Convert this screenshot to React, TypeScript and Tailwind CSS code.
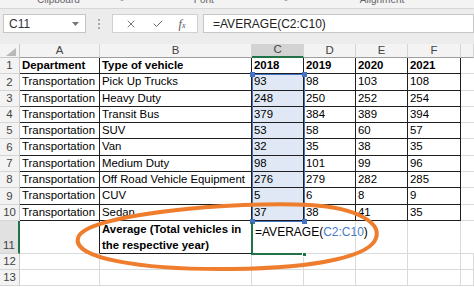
import React from 'react';
import { X, Check } from 'lucide-react';

const rows = [
  ['Department', 'Type of vehicle', '2018', '2019', '2020', '2021'],
  ['Transportation', 'Pick Up Trucks', '93', '98', '103', '108'],
  ['Transportation', 'Heavy Duty', '248', '250', '252', '254'],
  ['Transportation', 'Transit Bus', '379', '384', '389', '394'],
  ['Transportation', 'SUV', '53', '58', '60', '57'],
  ['Transportation', 'Van', '32', '35', '38', '35'],
  ['Transportation', 'Medium Duty', '98', '101', '99', '96'],
  ['Transportation', 'Off Road Vehicle Equipment', '276', '279', '282', '285'],
  ['Transportation', 'CUV', '5', '6', '8', '9'],
  ['Transportation', 'Sedan', '37', '38', '41', '35'],
];

const cols = ['A', 'B', 'C', 'D', 'E', 'F', ''];

const RowHead = ({ n, h, active }: { n: string; h: string; active?: boolean }) => (
  <div
    className={`${h} flex items-end justify-center border-b border-[#d5d5d5] leading-[16px] text-[#444] ${
      active ? 'bg-[#e1e1e1] border-r-2 border-r-[#217346]' : 'bg-[#f3f3f3] border-r border-r-[#c8c8c8]'
    }`}
  >
    {n}
  </div>
);

const App = () => {
  return (
    <div className="relative w-[474px] h-[287px] overflow-hidden bg-white font-['Liberation_Sans',Arial,sans-serif] text-[11.4px] text-black">
      {/* ribbon group labels, cut off at the top */}
      <div className="h-[9px] overflow-hidden bg-[#f3f3f3] border-b border-[#d6d6d6] text-[10px] text-[#666] flex">
        <span className="ml-[37px] -mt-[8px]">Clipboard</span>
        <span className="ml-[40px] -mt-[8px] text-[8px]">⌞</span>
        <span className="ml-[70px] -mt-[8px]">Font</span>
        <span className="ml-[70px] -mt-[8px] text-[8px]">⌞</span>
        <span className="ml-[72px] -mt-[8px]">Alignment</span>
      </div>

      {/* formula bar */}
      <div className="h-[35px] bg-[#ececec] pt-[5px] flex items-start">
        <div className="ml-[3px] w-[83px] h-[19px] bg-white border border-[#c6c6c6] flex items-center pl-[5px] text-[12px] text-[#333]">
          <span className="flex-1">C11</span>
          <svg width="7" height="4" viewBox="0 0 7 4" className="mr-[6px]">
            <path d="M0 0 L7 0 L3.5 4 Z" fill="#777" />
          </svg>
        </div>
        <div className="w-[26px] h-[19px] flex flex-col items-center justify-center gap-[2px]">
          <span className="w-[2px] h-[2px] bg-[#aaa]" />
          <span className="w-[2px] h-[2px] bg-[#aaa]" />
          <span className="w-[2px] h-[2px] bg-[#aaa]" />
        </div>
        <div className="w-[86px] h-[19px] bg-white border border-[#d0d0d0] flex items-center justify-around px-[4px] text-[#555]">
          <X size={12} strokeWidth={1.6} />
          <Check size={12} strokeWidth={1.8} />
          <span className="font-['Liberation_Serif',serif] italic text-[12px] text-[#555]">
            f<span className="text-[8px]">x</span>
          </span>
        </div>
        <div className="ml-[5px] flex-1 h-[19px] bg-white border border-[#c6c6c6] flex items-center pl-[9px] text-[12px] text-[#222]">
          =AVERAGE(C2:C10)
        </div>
      </div>

      {/* sheet grid */}
      <div className="relative grid grid-cols-[20px_80px_152px_52px_52px_52px_53px_1fr]">
        {/* column headers */}
        <div className="h-[14px] bg-[#f3f3f3] border-r border-b border-[#c8c8c8] relative">
          <svg width="10" height="8" viewBox="0 0 10 8" className="absolute right-[3px] bottom-[1px]">
            <path d="M10 0 L10 8 L0 8 Z" fill="#b9b9b9" />
          </svg>
        </div>
        {cols.map((c) => (
          <div
            key={c || 'g'}
            className={`h-[14px] flex items-center justify-center text-[#444] border-r border-r-[#d5d5d5] ${
              c === 'C' ? 'bg-[#d3d3d3] border-b-2 border-b-[#217346]' : 'bg-[#f3f3f3] border-b border-b-[#9e9e9e]'
            }`}
          >
            {c}
          </div>
        ))}

        {/* rows 1..10 */}
        {rows.map((r, i) => (
          <React.Fragment key={i}>
            <RowHead n={String(i + 1)} h="h-[16.3px]" />
            {r.map((v, j) => (
              <div
                key={j}
                className={`h-[16.3px] px-[2px] leading-[15px] whitespace-nowrap border-r border-b border-[#1f1f1f] ${
                  i === 0 ? 'font-bold' : ''
                } ${j === 2 && i > 0 ? 'bg-[#dfe8f4]' : ''}`}
              >
                {v}
              </div>
            ))}
            <div className="h-[16.3px] border-b border-[#dadada]" />
          </React.Fragment>
        ))}

        {/* row 11 */}
        <RowHead n="11" h="h-[33px]" active />
        <div className="h-[33px] border-r border-r-[#1f1f1f] border-b border-b-[#dadada]" />
        <div className="h-[33px] px-[2px] leading-[16px] font-bold border-r border-b border-[#1f1f1f] flex flex-col justify-end">
          <span>Average (Total vehicles in</span>
          <span>the respective year)</span>
        </div>
        <div className="relative z-10 h-[33px] pl-[3px] pt-[3px] leading-[16px] whitespace-nowrap text-[12px]">
          =AVERAGE(<span className="text-[#4a7cc6]">C2:C10</span>)
        </div>
        <div className="h-[33px] border-r border-b border-[#dadada]" />
        <div className="h-[33px] border-r border-b border-[#dadada]" />
        <div className="h-[33px] border-r border-b border-[#dadada]" />
        <div className="h-[33px] border-b border-[#dadada]" />

        {/* rows 12, 13 */}
        {['12', '13'].map((n) => (
          <React.Fragment key={n}>
            <RowHead n={n} h="h-[16px]" />
            {cols.map((c) => (
              <div key={c || 'g'} className="h-[16px] border-r border-b border-[#dadada]" />
            ))}
          </React.Fragment>
        ))}

        {/* reference range C2:C10 */}
        <div className="absolute left-[252px] top-[30px] w-[53px] h-[148px] border border-[#4472c4] pointer-events-none">
          <span className="absolute -left-[3px] -top-[3px] w-[5px] h-[5px] bg-[#4472c4]" />
          <span className="absolute -right-[3px] -top-[3px] w-[5px] h-[5px] bg-[#4472c4]" />
          <span className="absolute -left-[3px] -bottom-[3px] w-[5px] h-[5px] bg-[#4472c4]" />
          <span className="absolute -right-[3px] -bottom-[3px] w-[5px] h-[5px] bg-[#4472c4]" />
        </div>

        {/* active cell C11 */}
        <div className="absolute left-[251px] top-[178px] w-[53px] h-[33px] border-l-2 border-b-2 border-[#217346] pointer-events-none">
          <span className="absolute -right-[3px] -bottom-[4px] w-[5px] h-[5px] bg-[#217346] border border-white" />
        </div>
      </div>

      {/* hand-drawn highlight */}
      <svg className="absolute inset-0 pointer-events-none" width="474" height="287" viewBox="0 0 474 287">
        <path
          d="M78 238 C 84 214 236 201 310 205 C 360 208 381 224 376 238 C 371 255 322 268 232 269 C 140 270 72 258 78 238 Z"
          fill="none"
          stroke="#ef7d2e"
          strokeWidth="4"
        />
      </svg>
    </div>
  );
};

export default App;
